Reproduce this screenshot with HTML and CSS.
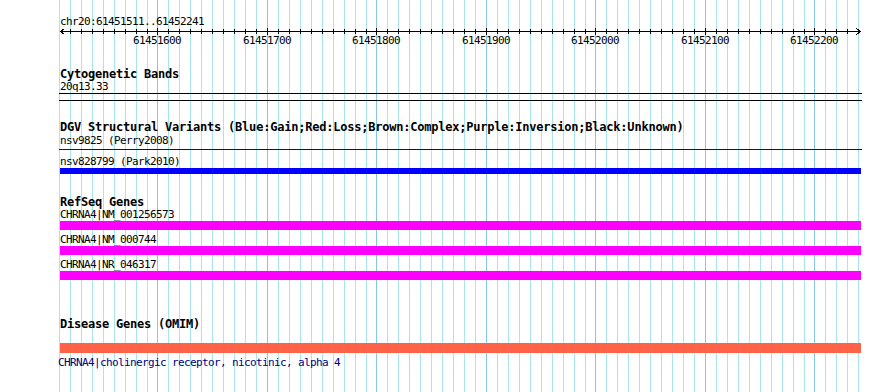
FILE: index.html
```html
<!DOCTYPE html>
<html lang="en">
    <head>
        <meta charset="UTF-8">
        <meta name="viewport" content="width=device-width, initial-scale=1.0">
        <title>chr20:61451511..61452241</title>
        <link rel="stylesheet" href="styles.css">
    </head>
    <body>
        <div class="panel">
            <svg class="grid" id="grid" width="890" height="392"></svg>
            <div class="tracks">
                <div class="ruler">
                    <div class="small ruler-title">chr20:61451511..61452241</div>
                    <svg class="ruler-axis" id="axis" width="802" height="10">
                        <rect x="0" y="5" width="801" height="1" fill="#000"></rect>
                        <path d="M4.5 2.5 L0.5 5.5 L4.5 8.5" stroke="#000" fill="none"></path>
                        <path d="M796.5 2.5 L800.5 5.5 L796.5 8.5" stroke="#000" fill="none"></path>
                    </svg>
                    <div class="small ruler-labels" id="labels"></div>
                </div>

                <div class="track cyto">
                    <div class="track-title">Cytogenetic Bands</div>
                    <div class="small cyto-label">20q13.33</div>
                    <div class="cyto-band"></div>
                </div>

                <div class="track dgv">
                    <div class="track-title">DGV Structural Variants (Blue:Gain;Red:Loss;Brown:Complex;Purple:Inversion;Black:Unknown)</div>
                    <div class="small">nsv9825 (Perry2008)</div>
                    <div class="dgv-line"></div>
                    <div class="small dgv-label2">nsv828799 (Park2010)</div>
                    <div class="bar bar-gain"></div>
                </div>

                <div class="track refseq">
                    <div class="track-title">RefSeq Genes</div>
                    <div class="small gene-first">CHRNA4|NM_001256573</div>
                    <div class="bar bar-gene"></div>
                    <div class="small gene-next">CHRNA4|NM_000744</div>
                    <div class="bar bar-gene"></div>
                    <div class="small gene-next">CHRNA4|NR_046317</div>
                    <div class="bar bar-gene"></div>
                </div>

                <div class="track omim">
                    <div class="track-title">Disease Genes (OMIM)</div>
                    <div class="bar bar-omim"></div>
                    <div class="small omim-desc">CHRNA4|cholinergic receptor, nicotinic, alpha 4</div>
                </div>
            </div>
        </div>

        <script>
            // 61451511 sits at x=60, about 1.095 px per base
            let start = 61451511;
            let scale = 1.095;
            let ns = 'http://www.w3.org/2000/svg';

            function xpos(pos){
                return Math.round(60 + (pos - start) * scale);
            }

            let grid = document.getElementById('grid');
            let axis = document.getElementById('axis');
            let labels = document.getElementById('labels');

            for(let pos = 61451510; pos <= 61452240; pos += 10){
                let x = xpos(pos);
                let major = (pos % 100 == 0);

                let line = document.createElementNS(ns, 'rect');
                line.setAttribute('x', x);
                line.setAttribute('y', 0);
                line.setAttribute('width', 1);
                line.setAttribute('height', 392);
                line.setAttribute('fill', major ? '#86c6e6' : '#a8e6ee');
                grid.appendChild(line);

                if(pos < start){
                    continue;
                }
                let tick = document.createElementNS(ns, 'rect');
                tick.setAttribute('x', x - 60);
                tick.setAttribute('y', major ? 2 : 3);
                tick.setAttribute('width', 1);
                tick.setAttribute('height', major ? 7 : 5);
                tick.setAttribute('fill', '#000');
                axis.appendChild(tick);

                if(major){
                    let label = document.createElement('span');
                    label.className = 'tick-label';
                    label.style.left = (x - 60 - 30) + 'px';
                    label.textContent = pos;
                    labels.appendChild(label);
                }
            }
        </script>
    </body>
</html>
```

FILE: styles.css
```css
body {
    margin: 0;
    background-color: #ffffff;
}

.panel {
    position: relative;
    width: 890px;
    height: 392px;
    overflow: hidden;
}

.grid {
    position: absolute;
    left: 0;
    top: 0;
    shape-rendering: crispEdges;
}

.tracks {
    position: relative;
    padding-left: 60px;
    color: #000000;
}

.small {
    font-family: "DejaVu Sans Mono", monospace;
    font-size: 11px;
    letter-spacing: -0.62px;
    line-height: 13px;
    height: 13px;
    white-space: nowrap;
}

.track-title {
    font-family: "DejaVu Sans Mono", monospace;
    font-weight: bold;
    font-size: 12px;
    letter-spacing: -0.22px;
    line-height: 13px;
    height: 13px;
    white-space: nowrap;
}

/* ruler */
.ruler-title {
    padding-top: 15px;
}

.ruler-axis {
    display: block;
    margin-top: -2px;
    shape-rendering: crispEdges;
}

.ruler-labels {
    position: relative;
    margin-top: -2px;
}

.tick-label {
    position: absolute;
    top: 0;
    width: 60px;
    text-align: center;
}

/* tracks */
.cyto {
    padding-top: 21px;
}

.cyto-label {
    margin-top: -1px;
}

.cyto-band {
    width: 803px;
    height: 8px;
    margin-left: -1px;
    box-sizing: border-box;
    border-top: 1px solid #000000;
    border-bottom: 1px solid #000000;
}

.dgv {
    padding-top: 20px;
}

.dgv-line {
    width: 803px;
    height: 1px;
    margin-top: 2px;
    margin-left: -1px;
    background-color: #0000cc;
}

.dgv-label2 {
    margin-top: 5px;
}

.bar {
    width: 801px;
}

.bar-gain {
    height: 6px;
    background-color: #0000ff;
}

.refseq {
    padding-top: 22px;
}

.gene-first {
    margin-top: -1px;
}

.bar-gene {
    height: 9px;
    background-color: #ff00ff;
}

.gene-next {
    margin-top: 3px;
}

.omim {
    padding-top: 38px;
}

.bar-omim {
    height: 10px;
    margin-top: 12px;
    background-color: #ff6347;
}

.omim-desc {
    margin-top: 3px;
    margin-left: -2px;
    color: #000080;
}
```
